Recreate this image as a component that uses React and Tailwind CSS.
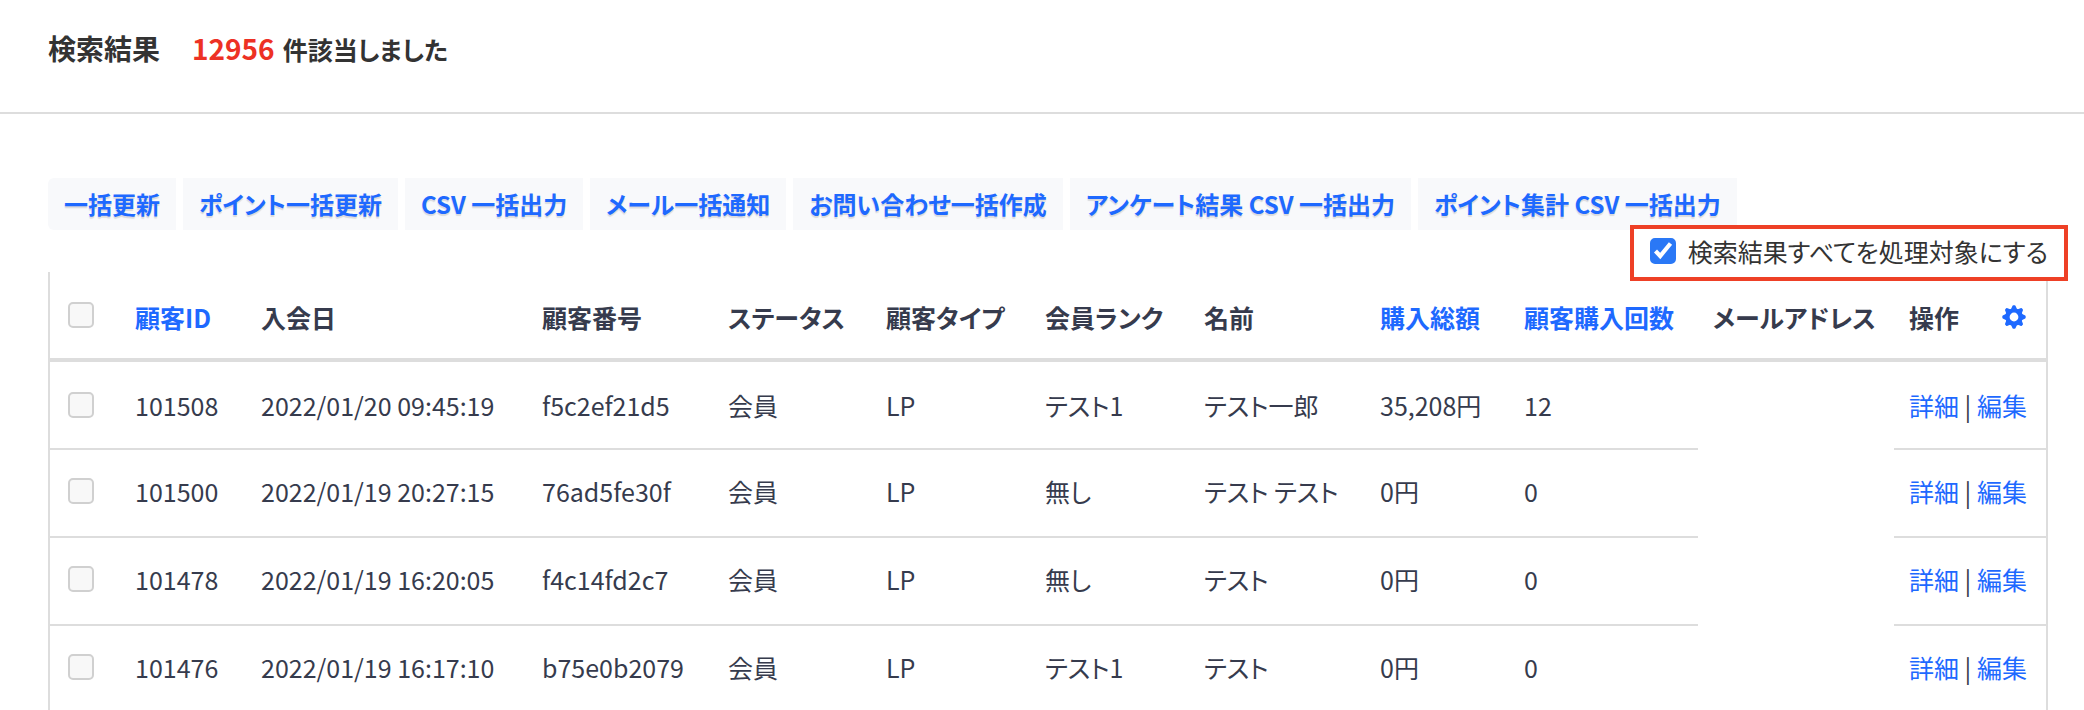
import { useState } from "react";

const actions = [
  "一括更新",
  "ポイント一括更新",
  "CSV 一括出力",
  "メール一括通知",
  "お問い合わせ一括作成",
  "アンケート結果 CSV 一括出力",
  "ポイント集計 CSV 一括出力",
];

const columns = [
  { label: "顧客ID", width: "w-[126px]", sortable: true },
  { label: "入会日", width: "w-[281px]" },
  { label: "顧客番号", width: "w-[186px]" },
  { label: "ステータス", width: "w-[158px]" },
  { label: "顧客タイプ", width: "w-[159px]" },
  { label: "会員ランク", width: "w-[159px]" },
  { label: "名前", width: "w-[176px]" },
  { label: "購入総額", width: "w-[144px]", sortable: true },
  { label: "顧客購入回数", width: "w-auto", sortable: true },
  { label: "メールアドレス", width: "w-[196px]" },
];

const customers = [
  {
    id: "101508",
    joinedAt: "2022/01/20 09:45:19",
    number: "f5c2ef21d5",
    rank: "テスト1",
    name: "テスト一郎",
    total: "35,208円",
    count: "12",
  },
  {
    id: "101500",
    joinedAt: "2022/01/19 20:27:15",
    number: "76ad5fe30f",
    rank: "無し",
    name: "テスト テスト",
    total: "0円",
    count: "0",
  },
  {
    id: "101478",
    joinedAt: "2022/01/19 16:20:05",
    number: "f4c14fd2c7",
    rank: "無し",
    name: "テスト",
    total: "0円",
    count: "0",
  },
  {
    id: "101476",
    joinedAt: "2022/01/19 16:17:10",
    number: "b75e0b2079",
    rank: "テスト1",
    name: "テスト",
    total: "0円",
    count: "0",
  },
];

const teeth = [0, 45, 90, 135, 180, 225, 270, 315];

function GearIcon() {
  return (
    <svg viewBox="0 0 24 24" className="h-6 w-6" fill="currentColor">
      <circle cx="12" cy="12" r="6.6" fill="none" stroke="currentColor" strokeWidth="4.4" />
      {teeth.map((angle) => (
        <path
          key={angle}
          d="M8.6 5 L10.3 1.2 Q10.6 0.3 11.4 0.3 H12.6 Q13.4 0.3 13.7 1.2 L15.4 5 Z"
          transform={`rotate(${angle} 12 12)`}
        />
      ))}
    </svg>
  );
}

function Checkbox(props) {
  return (
    <span className="relative block h-[26px] w-[26px] flex-none">
      <input
        type="checkbox"
        className="peer block h-[26px] w-[26px] appearance-none rounded-[5px] border-2 border-[#d0d0d0] bg-[#f8f8f8] checked:border-[#2a78f6] checked:bg-[#2a78f6]"
        {...props}
      />
      <svg
        viewBox="0 0 26 26"
        fill="none"
        stroke="white"
        strokeWidth="4.2"
        className="pointer-events-none absolute inset-0 hidden h-[26px] w-[26px] peer-checked:block"
      >
        <path d="M5.5 13 L10.2 18 L20.5 5.5" />
      </svg>
    </span>
  );
}

function Cell({ children }) {
  return <td className="border-b-2 border-[#ddd] pl-[15px]">{children}</td>;
}

function App() {
  const [selectAll, setSelectAll] = useState(true);

  return (
    <div className="h-screen overflow-hidden bg-white font-['Noto_Sans_CJK_JP',sans-serif] text-[25px] leading-8 text-[#333] [font-feature-settings:'palt']">
      <header className="flex h-[114px] items-baseline border-b-2 border-[#ddd] px-12 pt-7 font-bold">
        <h1 className="mr-8 text-[28px] leading-10">検索結果</h1>
        <p className="leading-10">
          <span className="mr-2 text-[28px] text-[#ed3124]">12956</span>
          件該当しました
        </p>
      </header>

      <main className="pt-16 pr-9 pl-12">
        <div className="flex gap-[7px]">
          {actions.map((action) => (
            <button
              key={action}
              type="button"
              className="h-[52px] bg-[#f8f9fb] px-4 text-2xl font-bold whitespace-nowrap text-[#1e69ff] [text-shadow:0_2px_1px_rgba(0,0,0,0.12)] first:rounded-l-md"
            >
              {action}
            </button>
          ))}
        </div>

        <div className="flex h-[42px] items-center justify-end">
          <label className="relative isolate flex items-center gap-3">
            <span
              aria-hidden="true"
              className="absolute -inset-x-5 -top-2.5 -bottom-3.5 -z-10 border-4 border-[#ee4026] bg-white"
            />
            <Checkbox
              checked={selectAll}
              onChange={(event) => setSelectAll(event.target.checked)}
            />
            検索結果すべてを処理対象にする
          </label>
        </div>

        <table className="w-full table-fixed border-separate border-spacing-0 border-x-2 border-[#ddd] text-left whitespace-nowrap text-[#363b4d]">
          <thead>
            <tr className="h-[90px]">
              <th className="w-[70px] border-b-4 border-[#ddd] pl-[18px]">
                <Checkbox aria-label="すべて選択" />
              </th>
              {columns.map((column) => (
                <th
                  key={column.label}
                  className={`border-b-4 border-[#ddd] pt-1 pl-[15px] font-bold ${column.width}`}
                >
                  {column.sortable ? (
                    <a href="#" className="text-[#1e69ff]">
                      {column.label}
                    </a>
                  ) : (
                    column.label
                  )}
                </th>
              ))}
              <th className="w-[152px] border-b-4 border-[#ddd] pt-1 pr-5 pl-[15px] font-bold">
                <div className="flex items-center justify-between">
                  操作
                  <button type="button" aria-label="表示設定" className="text-[#1e69ff]">
                    <GearIcon />
                  </button>
                </div>
              </th>
            </tr>
          </thead>
          <tbody>
            {customers.map((customer) => (
              <tr key={customer.id} className="h-[88px] [&:not(:first-child)>td]:pb-1">
                <td className="border-b-2 border-[#ddd] pl-[18px]">
                  <Checkbox aria-label={customer.id} />
                </td>
                <Cell>{customer.id}</Cell>
                <Cell>{customer.joinedAt}</Cell>
                <Cell>{customer.number}</Cell>
                <Cell>会員</Cell>
                <Cell>LP</Cell>
                <Cell>{customer.rank}</Cell>
                <Cell>{customer.name}</Cell>
                <Cell>{customer.total}</Cell>
                <Cell>{customer.count}</Cell>
                <td />
                <Cell>
                  <a href="#" className="text-[#1e69ff]">
                    詳細
                  </a>
                  {" | "}
                  <a href="#" className="text-[#1e69ff]">
                    編集
                  </a>
                </Cell>
              </tr>
            ))}
          </tbody>
        </table>
      </main>
    </div>
  );
}

export default App;
